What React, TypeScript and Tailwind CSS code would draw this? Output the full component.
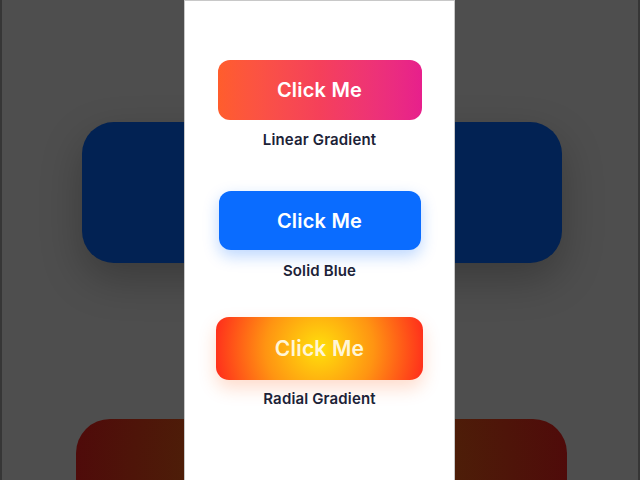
import React from 'react';

const font = { fontFamily: 'Inter, "Noto Sans", sans-serif' };

function Backdrop() {
  // Blown-up, dimmed copies of the buttons behind the phone frame
  return (
    <div className="flex flex-col items-center w-full h-full">
      <div className="shrink-0 mt-[122px] ml-[4px] w-[480px] h-[141px] rounded-[32px] bg-[#022253] shadow-[0_16px_40px_rgba(0,0,0,0.25)]" />
      <div className="shrink-0 mt-[156px] ml-[3px] w-[491px] h-[90px] rounded-t-[34px] bg-radial-[circle_at_50%_60%] from-[#4e3306] via-[#4d1f08] to-[#4f0a0a]" />
    </div>
  );
}

export default function App() {
  return (
    <div
      className="relative w-[640px] h-[480px] overflow-hidden bg-[#4e4e4e] border-x-2 border-[#363636]"
      style={font}
    >
      <Backdrop />

      <div className="absolute inset-y-0 left-[182px] w-[271px] bg-white border-x border-t border-[#c8c8c8] flex flex-col items-center">
        {/* Linear gradient button */}
        <button className="mt-[59px] w-[204px] h-[60px] rounded-[12px] bg-linear-to-r from-[#ff5d2c] via-[#f5405a] to-[#e71f8c] text-white text-[20px] font-semibold tracking-[0.01em]">
          Click Me
        </button>
        <p className="mt-[10px] h-[20px] text-[15px] leading-[20px] font-semibold tracking-[0.01em] text-[#1c2237]">
          Linear Gradient
        </p>

        {/* Solid blue button */}
        <button className="mt-[41px] w-[202px] h-[59px] rounded-[12px] bg-[#0a6cff] text-white text-[20px] font-semibold tracking-[0.01em] shadow-[0_6px_16px_rgba(10,108,255,0.28)]">
          Click Me
        </button>
        <p className="mt-[11px] h-[20px] text-[15px] leading-[20px] font-semibold tracking-[0.01em] text-[#1c2237]">
          Solid Blue
        </p>

        {/* Radial gradient button */}
        <button className="mt-[36px] w-[207px] h-[63px] rounded-[13px] bg-radial-[circle] from-[#ffd80c] from-5% via-[#ff9412] via-50% to-[#ff2a1c] text-[#fff6d8] text-[21px] font-semibold tracking-[0.01em] shadow-[0_8px_18px_rgba(255,90,20,0.22)]">
          Click Me
        </button>
        <p className="mt-[9px] h-[20px] text-[15px] leading-[20px] font-semibold tracking-[0.01em] text-[#1c2237]">
          Radial Gradient
        </p>
      </div>
    </div>
  );
}
